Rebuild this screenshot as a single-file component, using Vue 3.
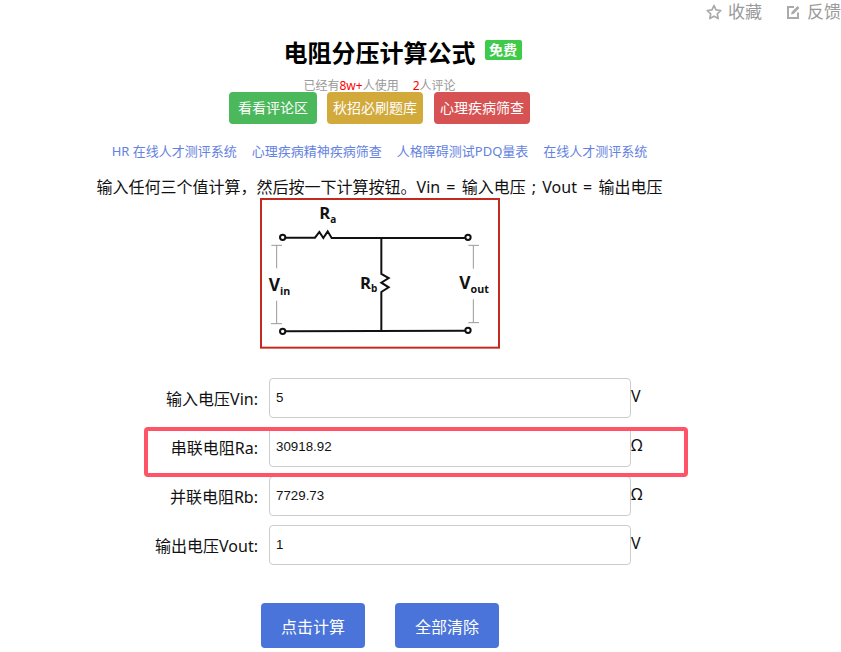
<script setup>
const links = [
  'HR 在线人才测评系统',
  '心理疾病精神疾病筛查',
  '人格障碍测试PDQ量表',
  '在线人才测评系统'
]

const rows = [
  { label: '输入电压Vin:', value: '5', unit: 'V' },
  { label: '串联电阻Ra:', value: '30918.92', unit: 'Ω' },
  { label: '并联电阻Rb:', value: '7729.73', unit: 'Ω' },
  { label: '输出电压Vout:', value: '1', unit: 'V' }
]
</script>

<template>
  <div class="page">
    <div class="top-bar">
      <span class="top-item">
        <svg width="16" height="16" viewBox="0 0 16 16">
          <path d="M8 1.5l2 4.4 4.8.6-3.5 3.3.9 4.8L8 12.2l-4.2 2.4.9-4.8L1.2 6.5 6 5.9z" fill="none" stroke="#aaa" stroke-width="1.7" stroke-linejoin="round" />
        </svg>
        收藏
      </span>
      <span class="top-item">
        <svg width="16" height="16" viewBox="0 0 16 16">
          <path d="M13 8.5V14H3V3h6" fill="none" stroke="#aaa" stroke-width="2" />
          <path d="M6 10.5l.6-2.6L12.5 2l2 2-5.9 5.9z" fill="#aaa" />
        </svg>
        反馈
      </span>
    </div>

    <div class="main">
      <h1 class="title">电阻分压计算公式<span class="badge">免费</span></h1>
      <div class="stats">已经有<em>8w+</em>人使用<em class="count">2</em>人评论</div>

      <div class="actions">
        <a class="action green">看看评论区</a>
        <a class="action yellow">秋招必刷题库</a>
        <a class="action red">心理疾病筛查</a>
      </div>

      <div class="links">
        <a v-for="link in links" :key="link" class="link">{{ link }}</a>
      </div>

      <p class="intro">输入任何三个值计算，然后按一下计算按钮。Vin = 输入电压 ; Vout = 输出电压</p>

      <svg class="diagram" width="240" height="152" viewBox="0 8 720 456">
        <rect x="3" y="11" width="714" height="446" fill="#fff" stroke="#c32a1e" stroke-width="6" />
        <g fill="none" stroke="#111" stroke-width="6">
          <circle cx="68" cy="126" r="8" />
          <circle cx="624" cy="126" r="8" />
          <circle cx="68" cy="408" r="8" />
          <circle cx="624" cy="405" r="8" />
          <path d="M77 127H165L178 110L190 128L203 108L215 128L228 128H615" />
          <path d="M364 127V236L386 248L364 262L386 276L364 290L364 312V405" />
          <path d="M77 408L615 406" />
        </g>
        <g fill="none" stroke="#999" stroke-width="3">
          <path d="M34 150H66M50 150V219" />
          <path d="M50 316V385M33 385H66" />
          <path d="M625 150H657M640 150V220" />
          <path d="M640 312V382M625 382H657" />
        </g>
        <g class="diagram-text">
          <text x="178" y="72" font-size="50">R<tspan font-size="30" dy="10">a</tspan></text>
          <text x="26" y="286" font-size="52">V<tspan font-size="32" dy="12">in</tspan></text>
          <text x="300" y="280" font-size="50">R<tspan font-size="30" dy="10">b</tspan></text>
          <text x="598" y="282" font-size="52">V<tspan font-size="32" dy="12">out</tspan></text>
        </g>
      </svg>

      <div class="form">
        <div v-for="row in rows" :key="row.label" class="row">
          <label class="row-label">{{ row.label }}</label>
          <input class="row-input" type="text" :value="row.value">
          <span class="row-unit">{{ row.unit }}</span>
        </div>
        <div class="highlight"></div>
      </div>

      <div class="buttons">
        <button class="btn">点击计算</button>
        <button class="btn">全部清除</button>
      </div>
    </div>
  </div>
</template>

<style>
html,
body {
  margin: 0;
  background: #fff;
}
</style>

<style scoped>
.page {
  width: 841px;
  height: 652px;
  overflow: hidden;
  font-family: "Noto Sans", "Noto Sans CJK SC", sans-serif;
  color: #111;
}

.top-bar {
  display: flex;
  justify-content: flex-end;
  gap: 23px;
  height: 24px;
  font-size: 17px;
  line-height: 24px;
  color: #999;
}

.top-item {
  display: flex;
  align-items: center;
  gap: 6px;
}

.main {
  width: 759px;
  display: flex;
  flex-direction: column;
  align-items: center;
}

.title {
  position: relative;
  margin: 13px 0 0;
  font-size: 24px;
  line-height: 32px;
  font-weight: 700;
  color: #000;
}

.badge {
  position: absolute;
  left: 201px;
  top: 3px;
  width: 37px;
  height: 20px;
  border-radius: 2px;
  background: #3ecb4a;
  color: #fff;
  font-size: 14px;
  line-height: 20px;
  text-align: center;
}

.stats {
  margin-top: 9px;
  font-size: 12px;
  line-height: 15px;
  color: #999;
}

.stats em {
  font-style: normal;
  color: #f00;
}

.stats .count {
  margin-left: 14px;
}

.actions {
  display: flex;
  height: 32px;
  margin-top: -1px;
}

.action {
  border-radius: 4px;
  color: #fff;
  font-size: 14px;
  line-height: 32px;
  padding: 0 6px;
  text-align: center;
}

.green {
  background: #4cb85c;
  padding: 0 9px;
}

.yellow {
  background: #d2a93b;
  margin-left: 10px;
}

.red {
  background: #d75252;
  margin-left: 11px;
}

.links {
  display: flex;
  gap: 15px;
  margin-top: 17px;
  font-size: 13px;
  line-height: 20px;
}

.link {
  color: #6482e0;
}

.intro {
  margin: 14px 0 0;
  font-size: 16px;
  line-height: 24px;
  word-spacing: 2px;
  color: #111;
}

.diagram {
  display: block;
  margin: -1px 0 0 1px;
}

.diagram-text {
  font-family: "Open Sans", "Liberation Sans", sans-serif;
  font-weight: 700;
  fill: #111;
}

.form {
  position: relative;
  align-self: flex-start;
  display: flex;
  flex-direction: column;
  gap: 9px;
  width: 760px;
  margin-top: 28px;
}

.row {
  display: flex;
  height: 40px;
}

.row-label {
  width: 258px;
  text-align: right;
  font-size: 16px;
  line-height: 42px;
}

.row-input {
  box-sizing: border-box;
  width: 362px;
  height: 40px;
  margin-left: 11px;
  padding: 0 6px 2px;
  border: 1px solid #ccc;
  border-radius: 4px;
  background: #fff;
  font-family: "Liberation Sans", sans-serif;
  font-size: 13.33px;
  color: #111;
  outline: none;
}

.row-unit {
  font-size: 16px;
  line-height: 36px;
}

.highlight {
  position: absolute;
  left: 144px;
  top: 49px;
  width: 536px;
  height: 42px;
  border: 4px solid #ff5468;
  border-radius: 4px;
  pointer-events: none;
}

.buttons {
  display: flex;
  gap: 30px;
  margin: 38px 0 0 1px;
}

.btn {
  width: 104px;
  height: 45px;
  border: 0;
  border-radius: 4px;
  background: #4a74d9;
  color: #fff;
  font-family: inherit;
  font-size: 16px;
}
</style>
